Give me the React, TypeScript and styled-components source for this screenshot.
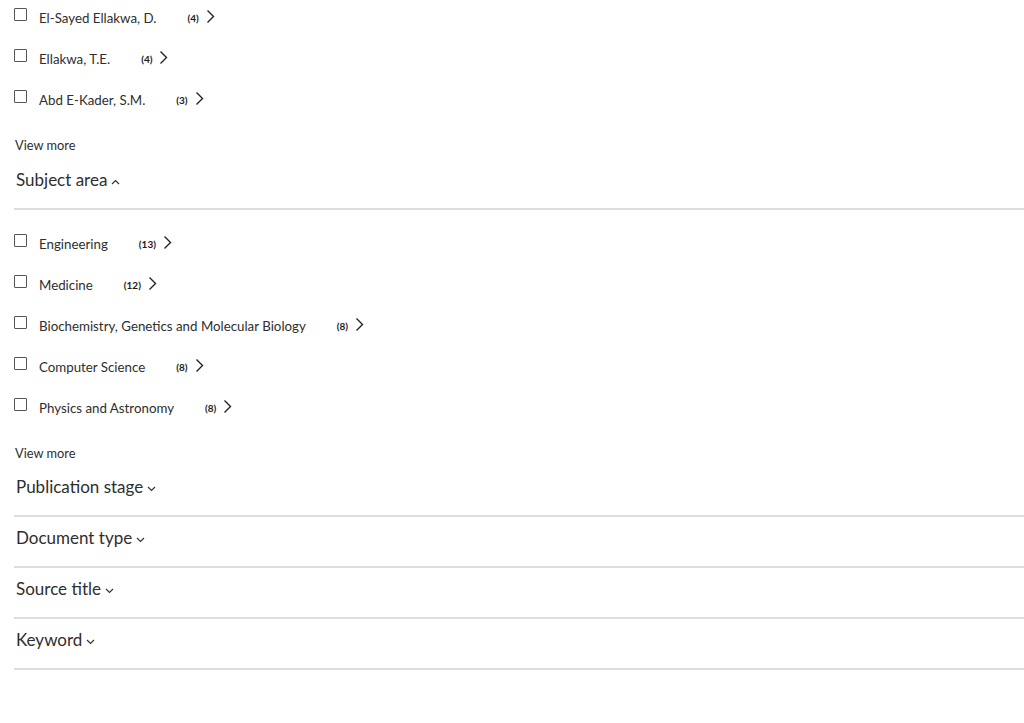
import * as React from 'react'
import styled, { createGlobalStyle } from 'styled-components'

const GlobalStyle = createGlobalStyle`
  body {
    margin: 0;
    background: #fff;
    font-family: Lato, "Noto Sans", sans-serif;
    color: #2e2e2e;
  }
`

const Panel = styled.div`
  display: flex;
  flex-direction: column;
  padding: 8px 0 0 14px;
`

const List = styled.ul`
  list-style: none;
  margin: 0;
  padding: 0;
`

const Row = styled.li`
  display: flex;
  align-items: flex-start;
  height: 41px;
`

const Box = styled.span`
  box-sizing: border-box;
  width: 13px;
  height: 13px;
  border: 1.5px solid #555;
  border-radius: 1px;
  flex: none;
`

const Label = styled.span`
  margin-left: 12px;
  margin-top: 2px;
  font-size: 13.3px;
  line-height: 16px;
  color: #2e2e2e;
`

const Count = styled.span`
  margin-left: 31px;
  margin-top: 3px;
  font-size: 10px;
  font-weight: 700;
  line-height: 14px;
  color: #1a1a1a;
`

const More = styled.div`
  margin-top: 6px;
  margin-left: 1px;
  font-size: 12.8px;
  line-height: 16px;
  color: #2e2e2e;
`

const Section = styled.div<{ $open?: boolean; $first?: boolean }>`
  display: flex;
  align-items: center;
  gap: 4px;
  padding: ${p => (p.$open ? '17px 0 18px 2px' : p.$first ? '16px 0 18px 2px' : '11px 0 18px 2px')};
  border-bottom: 2px solid #dedede;
  font-size: 17px;
  line-height: 20px;
  color: #2e2e2e;
  margin-bottom: ${p => (p.$open ? '24px' : '0')};
`

const Arrow = () => (
  <svg width="9" height="16" viewBox="0 0 9 16" style={{ marginLeft: 7, marginTop: 1 }}>
    <polyline points="1.5,1.5 7.5,7.5 1.5,13.5" fill="none" stroke="#222" strokeWidth="1.4" />
  </svg>
)

const Caret = ({ up }: { up?: boolean }) => (
  <svg width="9" height="6" viewBox="0 0 9 6" style={{ marginTop: 3 }}>
    <polyline
      points={up ? '1,5 4.5,1.5 8,5' : '1,1 4.5,4.5 8,1'}
      fill="none"
      stroke="#333"
      strokeWidth="1.2"
    />
  </svg>
)

const authors = [
  { name: 'El-Sayed Ellakwa, D.', n: 4 },
  { name: 'Ellakwa, T.E.', n: 4 },
  { name: 'Abd E-Kader, S.M.', n: 3 },
]

const subjects = [
  { name: 'Engineering', n: 13 },
  { name: 'Medicine', n: 12 },
  { name: 'Biochemistry, Genetics and Molecular Biology', n: 8 },
  { name: 'Computer Science', n: 8 },
  { name: 'Physics and Astronomy', n: 8 },
]

const Facet = ({ items }: { items: { name: string; n: number }[] }) => (
  <List>
    {items.map(i => (
      <Row key={i.name}>
        <Box />
        <Label>{i.name}</Label>
        <Count>({i.n})</Count>
        <Arrow />
      </Row>
    ))}
  </List>
)

export default function App() {
  return (
    <Panel>
      <GlobalStyle />
      <Facet items={authors} />
      <More>View more</More>
      <Section $open>
        Subject area <Caret up />
      </Section>
      <Facet items={subjects} />
      <More>View more</More>
      <Section $first>
        Publication stage <Caret />
      </Section>
      <Section>
        Document type <Caret />
      </Section>
      <Section>
        Source title <Caret />
      </Section>
      <Section>
        Keyword <Caret />
      </Section>
    </Panel>
  )
}
